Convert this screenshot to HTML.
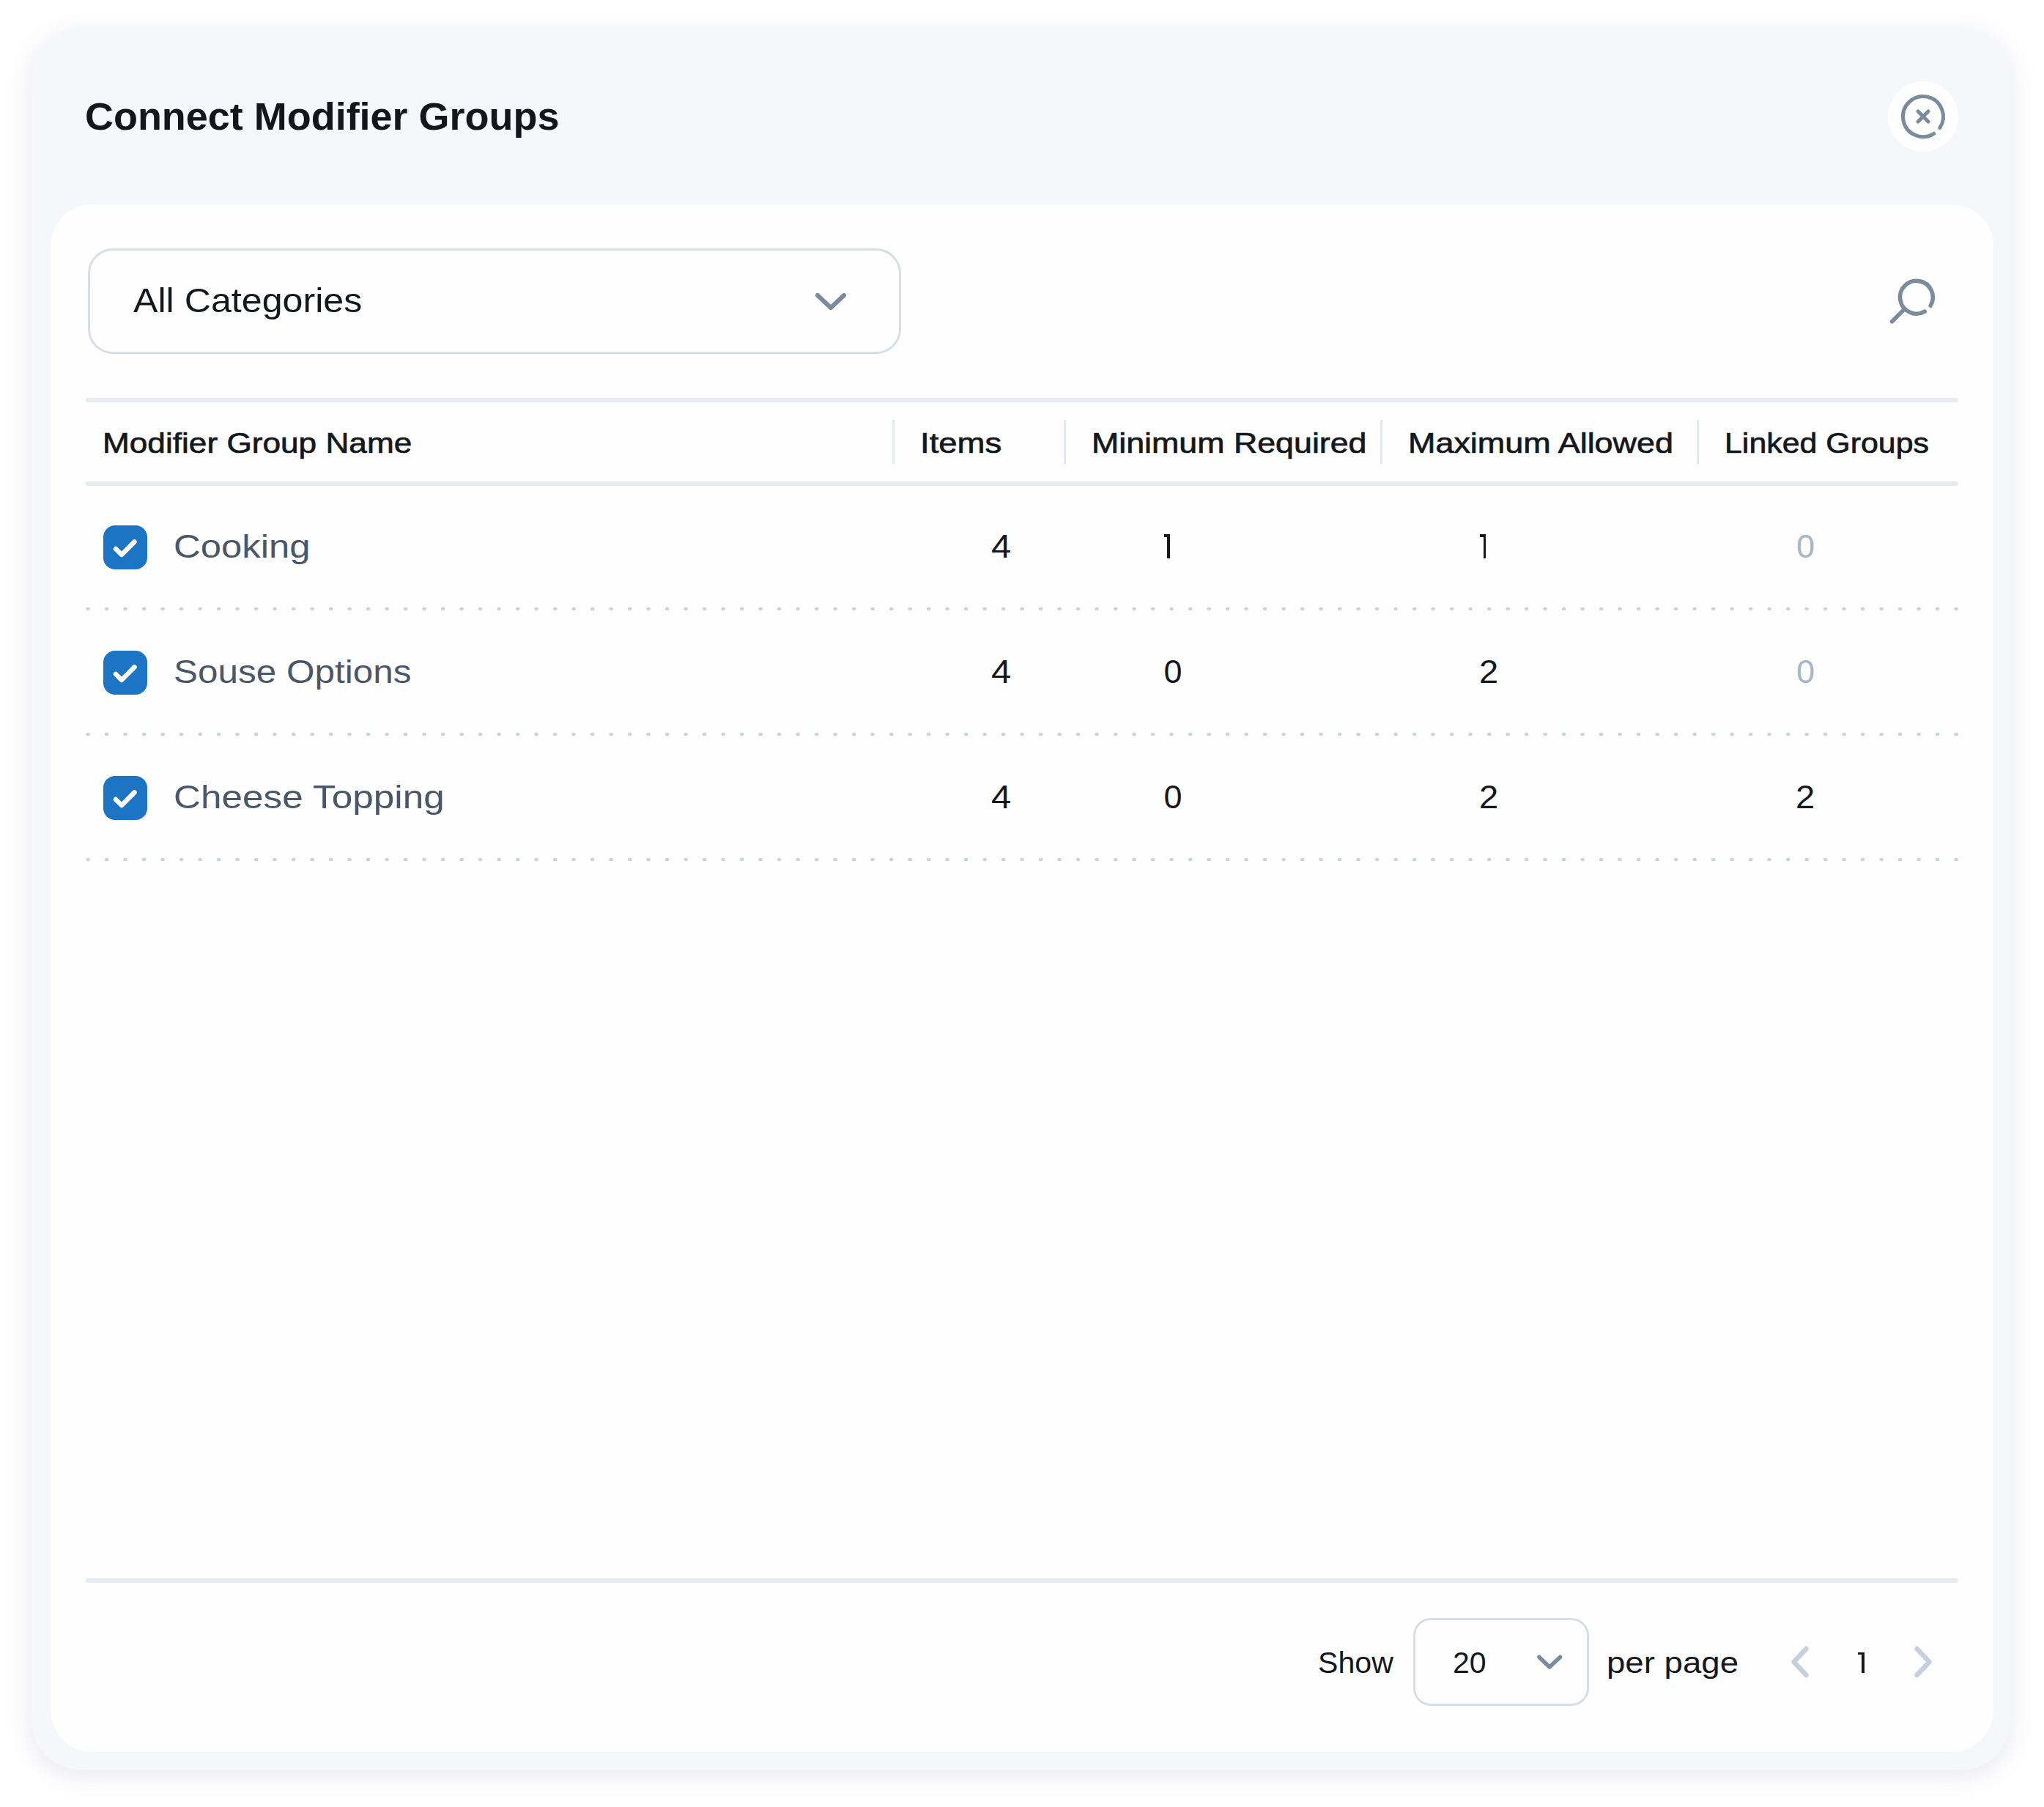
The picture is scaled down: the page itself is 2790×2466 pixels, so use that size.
<!DOCTYPE html>
<html><head><meta charset="utf-8"><title>Connect Modifier Groups</title>
<style>
html,body{margin:0;padding:0}
body{width:2790px;height:2466px;background:#fff;position:relative;overflow:hidden;font-family:"Liberation Sans",sans-serif}
.r{position:absolute;display:block}
.t{position:absolute;white-space:nowrap;line-height:1;transform-origin:0 0}
#modal{left:43px;top:38px;width:2701px;height:2377px;border-radius:66px;background:#f6f7fa;box-shadow:0 8px 32px rgba(95,95,155,0.145)}
#card{left:69px;top:279px;width:2652px;height:2112px;border-radius:57px;background:#fefefe}
.sel{box-sizing:border-box;border:3px solid #d6dee7;background:#fefefe}
</style></head><body>
<div id="modal" class="r"></div>
<div id="card" class="r"></div>
<div class="r" style="left:2577px;top:110.5px;width:96px;height:96px;border-radius:50%;background:#fefefe"></div>
<svg class="r" style="left:2577px;top:110.5px" width="96" height="96" viewBox="0 0 96 96"><g fill="none" stroke="#7b8b9c" stroke-width="5" stroke-linecap="round"><path d="M62.65 71.32 A27.5 27.5 0 1 1 70.8 63.38"/><path d="M41 41 L55 55 M55 41 L41 55"/></g></svg>
<div class="r sel" style="left:120px;top:339px;width:1110px;height:144px;border-radius:34px"></div>
<svg class="r" style="left:1104px;top:391px" width="60" height="40" viewBox="0 0 60 40"><path d="M12 12 L30 29 L48 12" fill="none" stroke="#7b8b9c" stroke-width="6" stroke-linecap="round" stroke-linejoin="round"/></svg>
<svg class="r" style="left:2570px;top:370px" width="90" height="90" viewBox="0 0 90 90"><g fill="none" stroke="#7b8b9c" stroke-width="5.6" stroke-linecap="round"><path d="M57.1 55.05 A22.4 22.4 0 1 1 65.15 47.1"/><path d="M29.9 51.6 L12.6 68.8"/></g></svg>
<div class="r" style="left:117px;top:543px;width:2556px;height:6px;border-radius:3px;background:#e6eaf2"></div>
<div class="r" style="left:117px;top:657px;width:2556px;height:6px;border-radius:3px;background:#e6eaf2"></div>
<div class="r" style="left:117px;top:2154px;width:2556px;height:6px;border-radius:3px;background:#e6eaf2"></div>
<div class="r" style="left:1218px;top:573px;width:3px;height:60px;background:#e4e8f0"></div>
<div class="r" style="left:1452px;top:573px;width:3px;height:60px;background:#e4e8f0"></div>
<div class="r" style="left:1884px;top:573px;width:3px;height:60px;background:#e4e8f0"></div>
<div class="r" style="left:2316px;top:573px;width:3px;height:60px;background:#e4e8f0"></div>
<div class="r" style="left:141px;top:717px;width:60px;height:60px;border-radius:16px;background:#1b74c4"></div>
<svg class="r" style="left:141px;top:717px" width="60" height="60" viewBox="0 0 60 60"><path d="M17 32 L25 40 L42.5 22.4" fill="none" stroke="#fff" stroke-width="6.5" stroke-linecap="round" stroke-linejoin="round"/></svg>
<svg class="r" style="left:110px;top:826.4px" width="2570" height="10"><line x1="9.5" y1="5" x2="2563" y2="5" stroke="#ccd4df" stroke-width="4.5" stroke-linecap="round" stroke-dasharray="1.2 24.3"/></svg>
<div class="r" style="left:141px;top:888px;width:60px;height:60px;border-radius:16px;background:#1b74c4"></div>
<svg class="r" style="left:141px;top:888px" width="60" height="60" viewBox="0 0 60 60"><path d="M17 32 L25 40 L42.5 22.4" fill="none" stroke="#fff" stroke-width="6.5" stroke-linecap="round" stroke-linejoin="round"/></svg>
<svg class="r" style="left:110px;top:997.4px" width="2570" height="10"><line x1="9.5" y1="5" x2="2563" y2="5" stroke="#ccd4df" stroke-width="4.5" stroke-linecap="round" stroke-dasharray="1.2 24.3"/></svg>
<div class="r" style="left:141px;top:1059px;width:60px;height:60px;border-radius:16px;background:#1b74c4"></div>
<svg class="r" style="left:141px;top:1059px" width="60" height="60" viewBox="0 0 60 60"><path d="M17 32 L25 40 L42.5 22.4" fill="none" stroke="#fff" stroke-width="6.5" stroke-linecap="round" stroke-linejoin="round"/></svg>
<svg class="r" style="left:110px;top:1168.4px" width="2570" height="10"><line x1="9.5" y1="5" x2="2563" y2="5" stroke="#ccd4df" stroke-width="4.5" stroke-linecap="round" stroke-dasharray="1.2 24.3"/></svg>
<div class="r sel" style="left:1929px;top:2208px;width:240px;height:120px;border-radius:24px"></div>
<svg class="r" style="left:2085px;top:2248px" width="60" height="40" viewBox="0 0 60 40"><path d="M16 13.5 L30 27 L44.5 13.5" fill="none" stroke="#7b8b9c" stroke-width="5.6" stroke-linecap="round" stroke-linejoin="round"/></svg>
<svg class="r" style="left:2435px;top:2238px" width="50" height="60" viewBox="0 0 50 60"><path d="M30.5 12 L13.5 30 L30.5 48" fill="none" stroke="#c6d0dc" stroke-width="6.5" stroke-linecap="round" stroke-linejoin="round"/></svg>
<svg class="r" style="left:2600px;top:2238px" width="50" height="60" viewBox="0 0 50 60"><path d="M16.5 12 L33.5 30 L16.5 48" fill="none" stroke="#c6d0dc" stroke-width="6.5" stroke-linecap="round" stroke-linejoin="round"/></svg>
<div class="t" style="left:115.94px;top:132.70px;font-size:52.33px;font-weight:bold;color:#13161b;transform:scaleX(1.0310);">Connect Modifier Groups</div>
<div class="t" style="left:182.00px;top:386.62px;font-size:46.51px;font-weight:normal;color:#14181d;transform:scaleX(1.0790);">All Categories</div>
<div class="t" style="left:139.62px;top:584.77px;font-size:39.24px;font-weight:normal;color:#14181d;transform:scaleX(1.1260);-webkit-text-stroke:0.7px #14181d;">Modifier Group Name</div>
<div class="t" style="left:1255.52px;top:584.77px;font-size:39.24px;font-weight:normal;color:#14181d;transform:scaleX(1.1592);-webkit-text-stroke:0.7px #14181d;">Items</div>
<div class="t" style="left:1489.58px;top:584.77px;font-size:39.24px;font-weight:normal;color:#14181d;transform:scaleX(1.1405);-webkit-text-stroke:0.7px #14181d;">Minimum Required</div>
<div class="t" style="left:1921.56px;top:584.77px;font-size:39.24px;font-weight:normal;color:#14181d;transform:scaleX(1.1451);-webkit-text-stroke:0.7px #14181d;">Maximum Allowed</div>
<div class="t" style="left:2353.72px;top:584.77px;font-size:39.24px;font-weight:normal;color:#14181d;transform:scaleX(1.0932);-webkit-text-stroke:0.7px #14181d;">Linked Groups</div>
<div class="t" style="left:1798.99px;top:2248.54px;font-size:40.70px;font-weight:normal;color:#14181d;transform:scaleX(1.0109);">Show</div>
<div class="t" style="left:1982.98px;top:2248.54px;font-size:40.70px;font-weight:normal;color:#14181d;transform:scaleX(1.0087);">20</div>
<div class="t" style="left:2192.76px;top:2248.54px;font-size:40.70px;font-weight:normal;color:#14181d;transform:scaleX(1.1210);">per page</div>
<div class="t" style="left:236.74px;top:723.35px;font-size:45.06px;font-weight:normal;color:#4a5669;transform:scaleX(1.1289);">Cooking</div>
<div class="t" style="left:1353.41px;top:723.35px;font-size:45.06px;font-weight:normal;color:#14181d;transform:scaleX(1.0870);">4</div>
<div class="t" style="left:2452.00px;top:723.35px;font-size:45.06px;font-weight:normal;color:#a8b6c5;transform:scaleX(1.0000);">0</div>
<div class="t" style="left:236.80px;top:894.35px;font-size:45.06px;font-weight:normal;color:#4a5669;transform:scaleX(1.0977);">Souse Options</div>
<div class="t" style="left:1353.41px;top:894.35px;font-size:45.06px;font-weight:normal;color:#14181d;transform:scaleX(1.0870);">4</div>
<div class="t" style="left:1588.50px;top:894.35px;font-size:45.06px;font-weight:normal;color:#14181d;transform:scaleX(1.0000);">0</div>
<div class="t" style="left:2018.90px;top:894.35px;font-size:45.06px;font-weight:normal;color:#14181d;transform:scaleX(1.0476);">2</div>
<div class="t" style="left:2452.00px;top:894.35px;font-size:45.06px;font-weight:normal;color:#a8b6c5;transform:scaleX(1.0000);">0</div>
<div class="t" style="left:236.72px;top:1065.35px;font-size:45.06px;font-weight:normal;color:#4a5669;transform:scaleX(1.1383);">Cheese Topping</div>
<div class="t" style="left:1353.41px;top:1065.35px;font-size:45.06px;font-weight:normal;color:#14181d;transform:scaleX(1.0870);">4</div>
<div class="t" style="left:1588.50px;top:1065.35px;font-size:45.06px;font-weight:normal;color:#14181d;transform:scaleX(1.0000);">0</div>
<div class="t" style="left:2018.90px;top:1065.35px;font-size:45.06px;font-weight:normal;color:#14181d;transform:scaleX(1.0476);">2</div>
<div class="t" style="left:2450.90px;top:1065.35px;font-size:45.06px;font-weight:normal;color:#14181d;transform:scaleX(1.0476);">2</div>
<div class="r" style="left:1588.8px;top:729.2px;width:8.200000000000045px;height:3.7px;background:#14181d"></div><div class="r" style="left:1593.1px;top:729.2px;width:3.9px;height:32.69999999999993px;background:#14181d"></div>
<div class="r" style="left:2020.3px;top:729.2px;width:8.200000000000045px;height:3.7px;background:#14181d"></div><div class="r" style="left:2024.6px;top:729.2px;width:3.9px;height:32.69999999999993px;background:#14181d"></div>
<div class="r" style="left:2536px;top:2254.5px;width:9px;height:3.4px;background:#14181d"></div><div class="r" style="left:2541.4px;top:2254.5px;width:3.6px;height:28.5px;background:#14181d"></div>
</body></html>
